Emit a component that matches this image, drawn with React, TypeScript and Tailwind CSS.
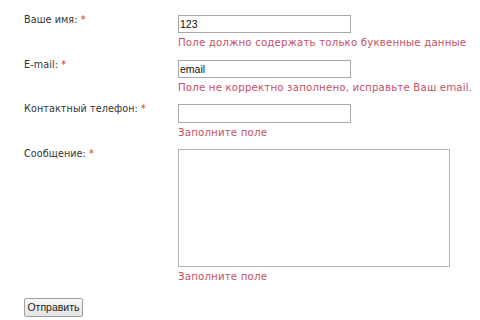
const LABEL_FONT = "font-['DejaVu_Sans','Verdana',sans-serif]";

function Label({ text }: { text: string }) {
  return (
    <div
      className={`w-[154px] shrink-0 mt-[-2px] text-[9.6px] leading-[14px] tracking-[0.1px] text-[#333] ${LABEL_FONT}`}
    >
      {text} <span className="text-[#e0302a]">*</span>
    </div>
  );
}

function ErrorText({ text }: { text: string }) {
  return (
    <p
      className={`mt-[2px] text-[10.2px] leading-[16px] tracking-[0.18px] text-[#c64f68] whitespace-nowrap ${LABEL_FONT}`}
    >
      {text}
    </p>
  );
}

const inputClass =
  "block h-[18px] w-[173px] border border-[#a9a9a9] bg-white px-[1px] text-[10.5px] text-[#111] font-['Liberation_Sans',Arial,sans-serif] outline-none";

export default function App() {
  return (
    <div className="h-[320px] w-[480px] bg-white pl-[24px] pt-[15px]">
      <form onSubmit={(e) => e.preventDefault()}>
        <div className="mb-[9px] flex">
          <Label text="Ваше имя:" />
          <div>
            <input className={inputClass} defaultValue="123" />
            <ErrorText text="Поле должно содержать только буквенные данные" />
          </div>
        </div>

        <div className="mb-[8px] flex">
          <Label text="E-mail:" />
          <div>
            <input className={inputClass} defaultValue="email" />
            <ErrorText text="Поле не корректно заполнено, исправьте Ваш email." />
          </div>
        </div>

        <div className="mb-[8px] flex">
          <Label text="Контактный телефон:" />
          <div>
            <input className={`${inputClass} h-[19px]`} />
            <ErrorText text="Заполните поле" />
          </div>
        </div>

        <div className="mb-[8px] flex">
          <Label text="Сообщение:" />
          <div>
            <textarea className="block h-[118px] w-[272px] resize-none border border-[#b5b5b5] bg-white outline-none" />
            <ErrorText text="Заполните поле" />
          </div>
        </div>

        <button
          type="submit"
          className="h-[19px] w-[59px] rounded-[2px] border border-[#a0a0a0] bg-gradient-to-b from-[#f8f8f8] to-[#e4e4e4] text-[10.5px] leading-[17px] text-[#222] font-['Liberation_Sans',Arial,sans-serif]"
        >
          Отправить
        </button>
      </form>
    </div>
  );
}
